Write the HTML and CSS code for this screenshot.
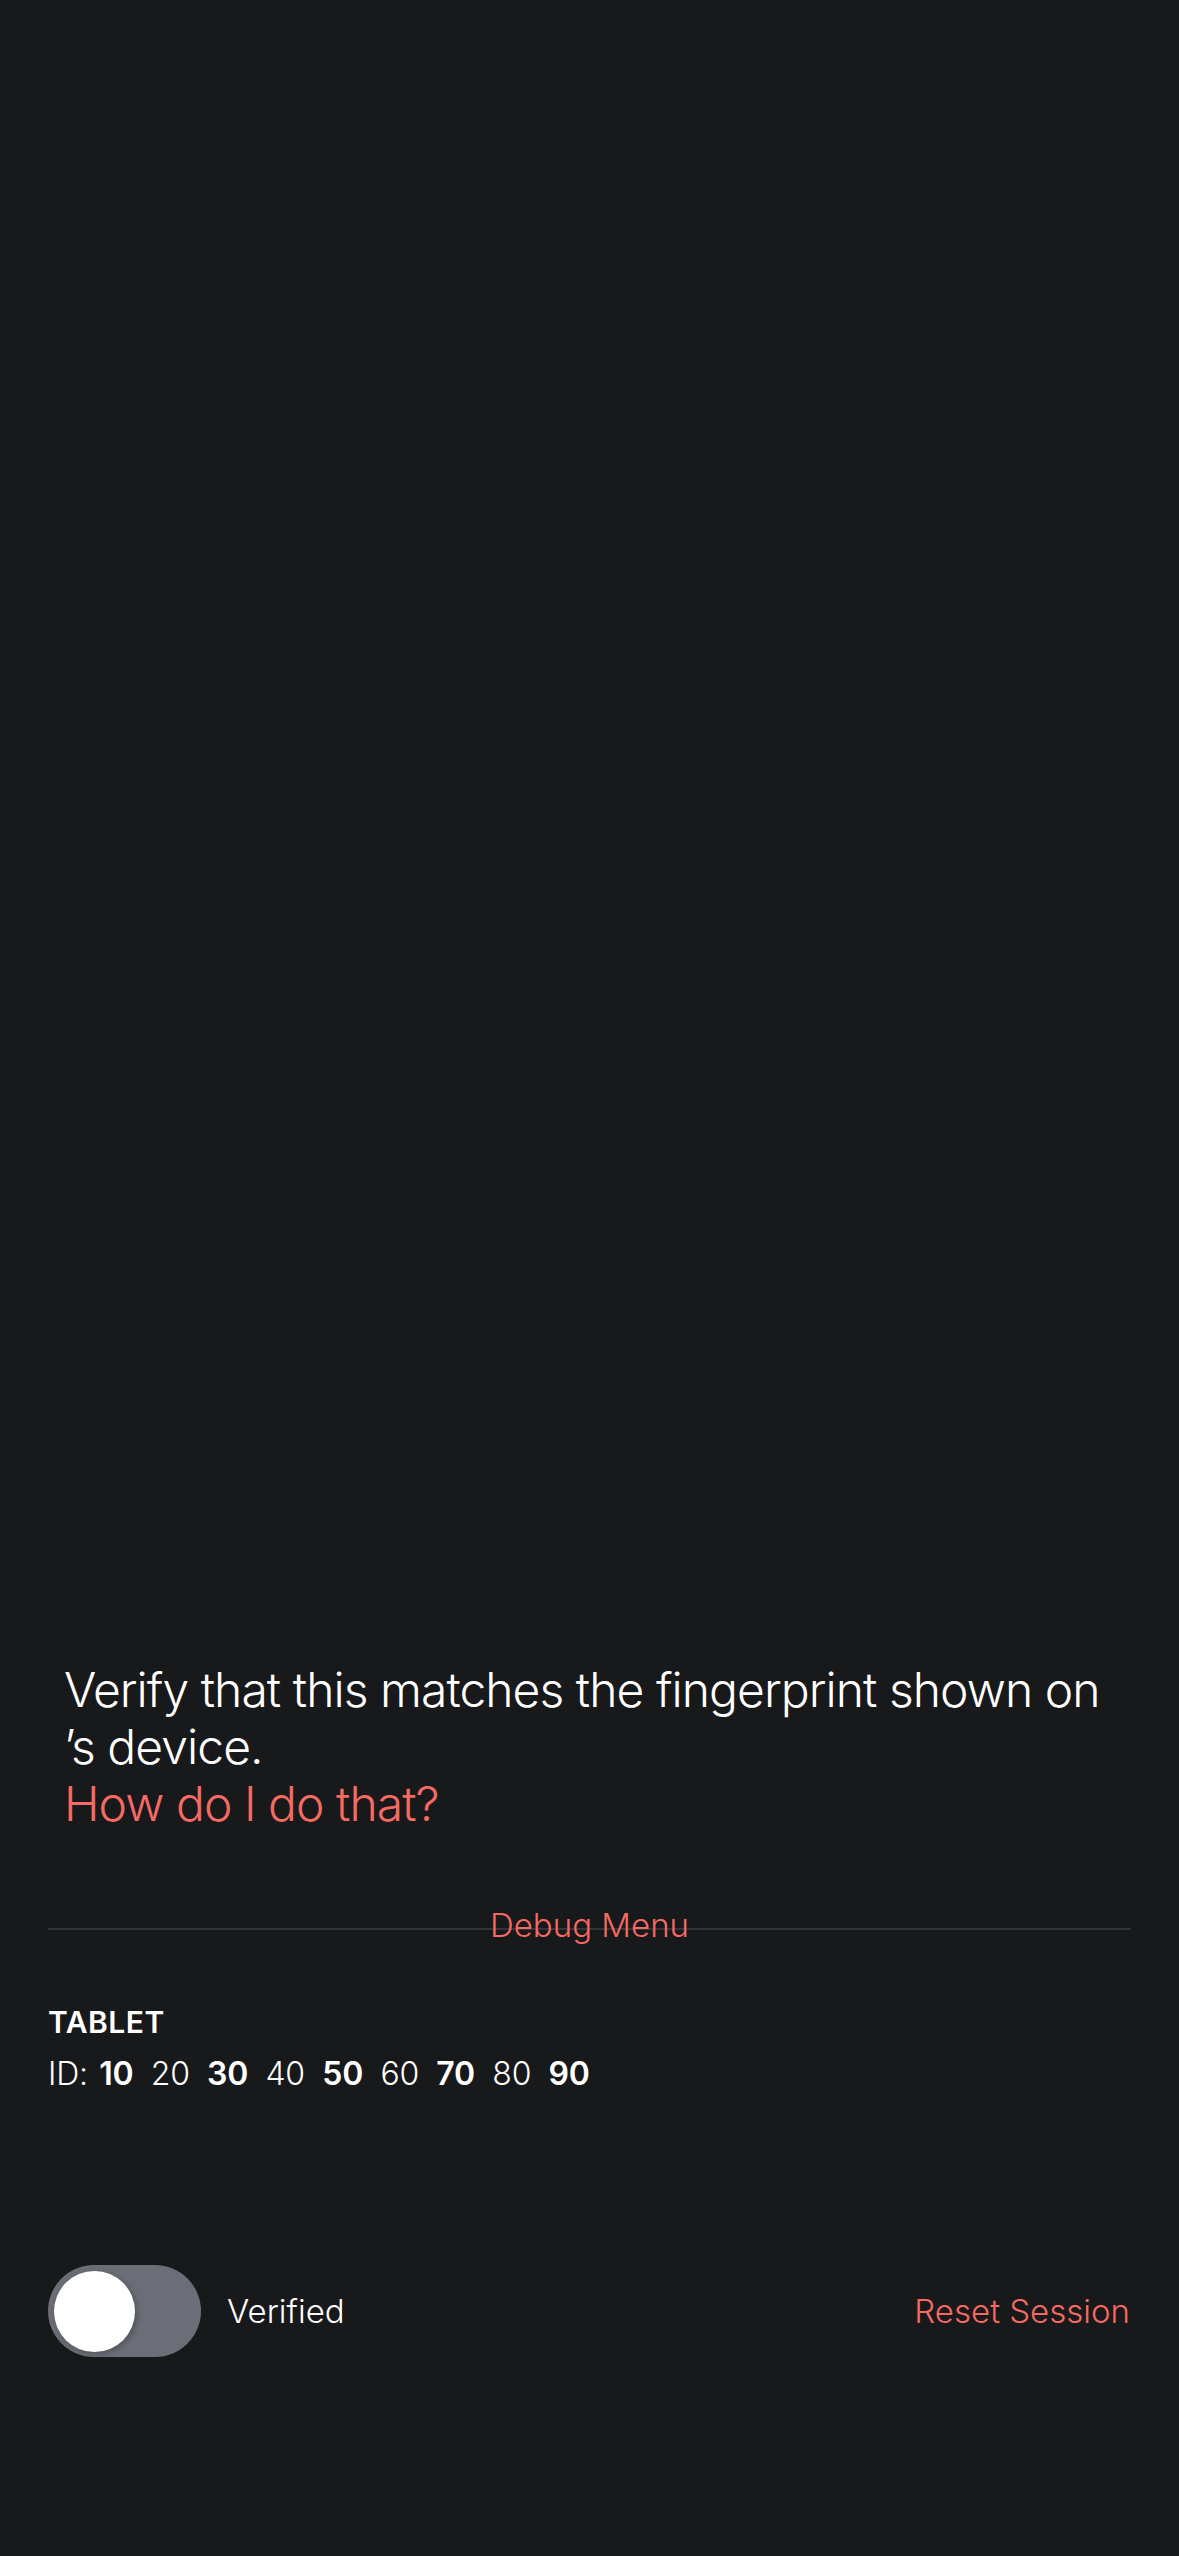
FILE: index.html
```html
<!DOCTYPE html>
<html lang="en">
<head>
<meta charset="utf-8">
<title>Verify</title>
<link rel="stylesheet" href="styles.css">
</head>
<body>
<main class="screen">
  <section class="verify">
    <p class="verify-text">Verify that this matches the fingerprint shown on ’s device.</p>
    <a class="verify-link" href="#">How do I do that?</a>
  </section>

  <div class="divider">
    <span class="divider-label">Debug Menu</span>
  </div>

  <section class="device">
    <div class="device-name">TABLET</div>
    <div class="device-id"><span class="id-label">ID:</span> <b>10</b> <span>20</span> <b>30</b> <span>40</span> <b>50</b> <span>60</span> <b>70</b> <span>80</span> <b>90</b></div>
  </section>

  <div class="controls">
    <div class="toggle-group">
      <div class="toggle"><div class="knob"></div></div>
      <span class="toggle-label">Verified</span>
    </div>
    <a class="reset" href="#">Reset Session</a>
  </div>
</main>
</body>
</html>
```

FILE: styles.css
```css
* { box-sizing: border-box; }
html, body {
  margin: 0;
  padding: 0;
  background: #18191b;
}
body {
  font-family: Inter, "Noto Sans", sans-serif;
  color: #ffffff;
}
.screen {
  width: 1179px;
  height: 2556px;
  padding-top: 1661px;
  display: flex;
  flex-direction: column;
}
.verify {
  padding: 0 48px 0 64px;
  font-size: 48px;
  line-height: 57px;
  font-weight: 300;
  letter-spacing: -0.95px;
}
.verify-text {
  margin: 0;
}
.verify-link {
  display: block;
  color: #f56a63;
  text-decoration: none;
}
.divider {
  margin: 96px 48px 0;
  height: 2px;
  background: #333437;
  position: relative;
  display: flex;
  justify-content: center;
}
.divider-label {
  position: absolute;
  top: -23px;
  font-size: 33px;
  line-height: 40px;
  font-weight: 300;
  color: #f56a63;
}
.device {
  padding: 0 48px;
  margin-top: 74px;
}
.device-name {
  font-size: 30px;
  line-height: 36px;
  font-weight: 600;
  letter-spacing: 0.5px;
}
.device-id {
  margin-top: 14px;
  font-size: 32px;
  line-height: 40px;
  font-weight: 300;
  word-spacing: 8.5px;
  letter-spacing: -0.2px;
}
.id-label { margin-right: -6px; }
.device-id b { font-weight: 600; }
.controls {
  margin-top: 171px;
  padding: 0 49px 0 48px;
  display: flex;
  align-items: center;
  justify-content: space-between;
}
.toggle-group {
  display: flex;
  align-items: center;
  gap: 26px;
}
.toggle {
  width: 153px;
  height: 92px;
  border-radius: 46px;
  background: #6b6e76;
  padding: 6px;
}
.knob {
  width: 81px;
  height: 81px;
  border-radius: 50%;
  background: #ffffff;
  box-shadow: 2px 2px 6px rgba(0,0,0,0.25);
}
.toggle-label {
  font-size: 33px;
  font-weight: 300;
}
.reset {
  font-size: 33px;
  font-weight: 300;
  color: #f56a63;
  text-decoration: none;
}
```
